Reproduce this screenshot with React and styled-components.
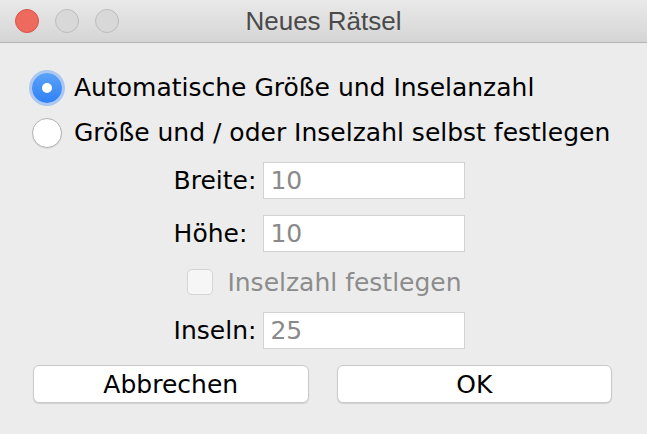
import React from "react";
import styled, { createGlobalStyle } from "styled-components";

const GlobalStyle = createGlobalStyle`
  html, body {
    margin: 0;
    padding: 0;
    background: #ececec;
  }
  * {
    box-sizing: border-box;
  }
`;

const Window = styled.div`
  width: 647px;
  height: 434px;
  overflow: hidden;
  background: #ececec;
  font-family: "DejaVu Sans", "Open Sans", sans-serif;
  color: #000;
`;

const TitleBar = styled.div`
  height: 43px;
  display: grid;
  grid-template-columns: 1fr auto 1fr;
  align-items: center;
  background: linear-gradient(#e9e9e9, #d5d5d5);
  border-bottom: 1px solid #b4b4b4;
  padding: 0 15px;
`;

const Lights = styled.div`
  display: flex;
  gap: 16px;
`;

const Light = styled.span`
  width: 24px;
  height: 24px;
  border-radius: 50%;
  background: ${(p) => (p.$red ? "#ee6a5e" : "#d8d8d8")};
  border: 1px solid ${(p) => (p.$red ? "#d5554a" : "#bdbdbd")};
`;

const Title = styled.div`
  font-family: "Liberation Sans", Arial, sans-serif;
  font-size: 26px;
  color: #4a4a4a;
  padding-top: 1px;
`;

const Body = styled.div`
  padding: 0 35px 0 33px;
  display: flex;
  flex-direction: column;
`;

const RadioRow = styled.label`
  height: 45px;
  display: flex;
  align-items: center;
  gap: 12px;
  font-size: 25px;
  &:first-child {
    margin-top: 22px;
  }
`;

const Radio = styled.span`
  width: 30px;
  height: 30px;
  margin-left: -1px;
  border-radius: 50%;
  flex: none;
  display: flex;
  align-items: center;
  justify-content: center;
  ${(p) =>
    p.$checked
      ? `
    background: linear-gradient(#5aa2f9, #2f81f5);
    box-shadow: 0 0 0 3px rgba(120, 170, 245, 0.55);
    &::after {
      content: "";
      width: 10px;
      height: 10px;
      border-radius: 50%;
      background: #fff;
    }
  `
      : `
    background: #fff;
    border: 1px solid #b3b3b3;
    box-shadow: 0 1px 1px rgba(0, 0, 0, 0.08);
  `}
`;

const Form = styled.div`
  margin-top: 7px;
  display: grid;
  grid-template-columns: auto 202px;
  justify-content: center;
  align-items: center;
  column-gap: 7px;
  row-gap: 16px;
  padding-right: 6px;
`;

const Label = styled.span`
  font-size: 25px;
`;

const Field = styled.div`
  height: 37px;
  background: #fff;
  border: 1px solid #d2d2d2;
  padding: 0 6px;
  display: flex;
  align-items: center;
  font-size: 25px;
  color: #8a8a8a;
`;

const CheckRow = styled.div`
  grid-column: 1 / -1;
  justify-self: center;
  height: 28px;
  display: flex;
  align-items: center;
  gap: 14px;
  font-size: 25px;
  color: #8c8c8c;
  padding-left: 10px;
`;

const Checkbox = styled.span`
  width: 26px;
  height: 26px;
  border-radius: 5px;
  background: #f6f6f6;
  border: 1px solid #d4d4d4;
`;

const Buttons = styled.div`
  margin-top: 16px;
  display: grid;
  grid-template-columns: 1fr 1fr;
  gap: 28px;
`;

const Button = styled.button`
  height: 38px;
  background: #fff;
  border: 1px solid #c9c9c9;
  border-radius: 6px;
  box-shadow: 0 1px 1px rgba(0, 0, 0, 0.12);
  font-family: "DejaVu Sans", "Open Sans", sans-serif;
  font-size: 25px;
  color: #000;
  padding: 0;
`;

export default function App() {
  return (
    <Window>
      <GlobalStyle />
      <TitleBar>
        <Lights>
          <Light $red />
          <Light />
          <Light />
        </Lights>
        <Title>Neues Rätsel</Title>
        <span />
      </TitleBar>
      <Body>
        <RadioRow>
          <Radio $checked />
          Automatische Größe und Inselanzahl
        </RadioRow>
        <RadioRow>
          <Radio />
          Größe und / oder Inselzahl selbst festlegen
        </RadioRow>
        <Form>
          <Label>Breite:</Label>
          <Field>10</Field>
          <Label>Höhe:</Label>
          <Field>10</Field>
          <CheckRow>
            <Checkbox />
            Inselzahl festlegen
          </CheckRow>
          <Label>Inseln:</Label>
          <Field>25</Field>
        </Form>
        <Buttons>
          <Button>Abbrechen</Button>
          <Button>OK</Button>
        </Buttons>
      </Body>
    </Window>
  );
}
